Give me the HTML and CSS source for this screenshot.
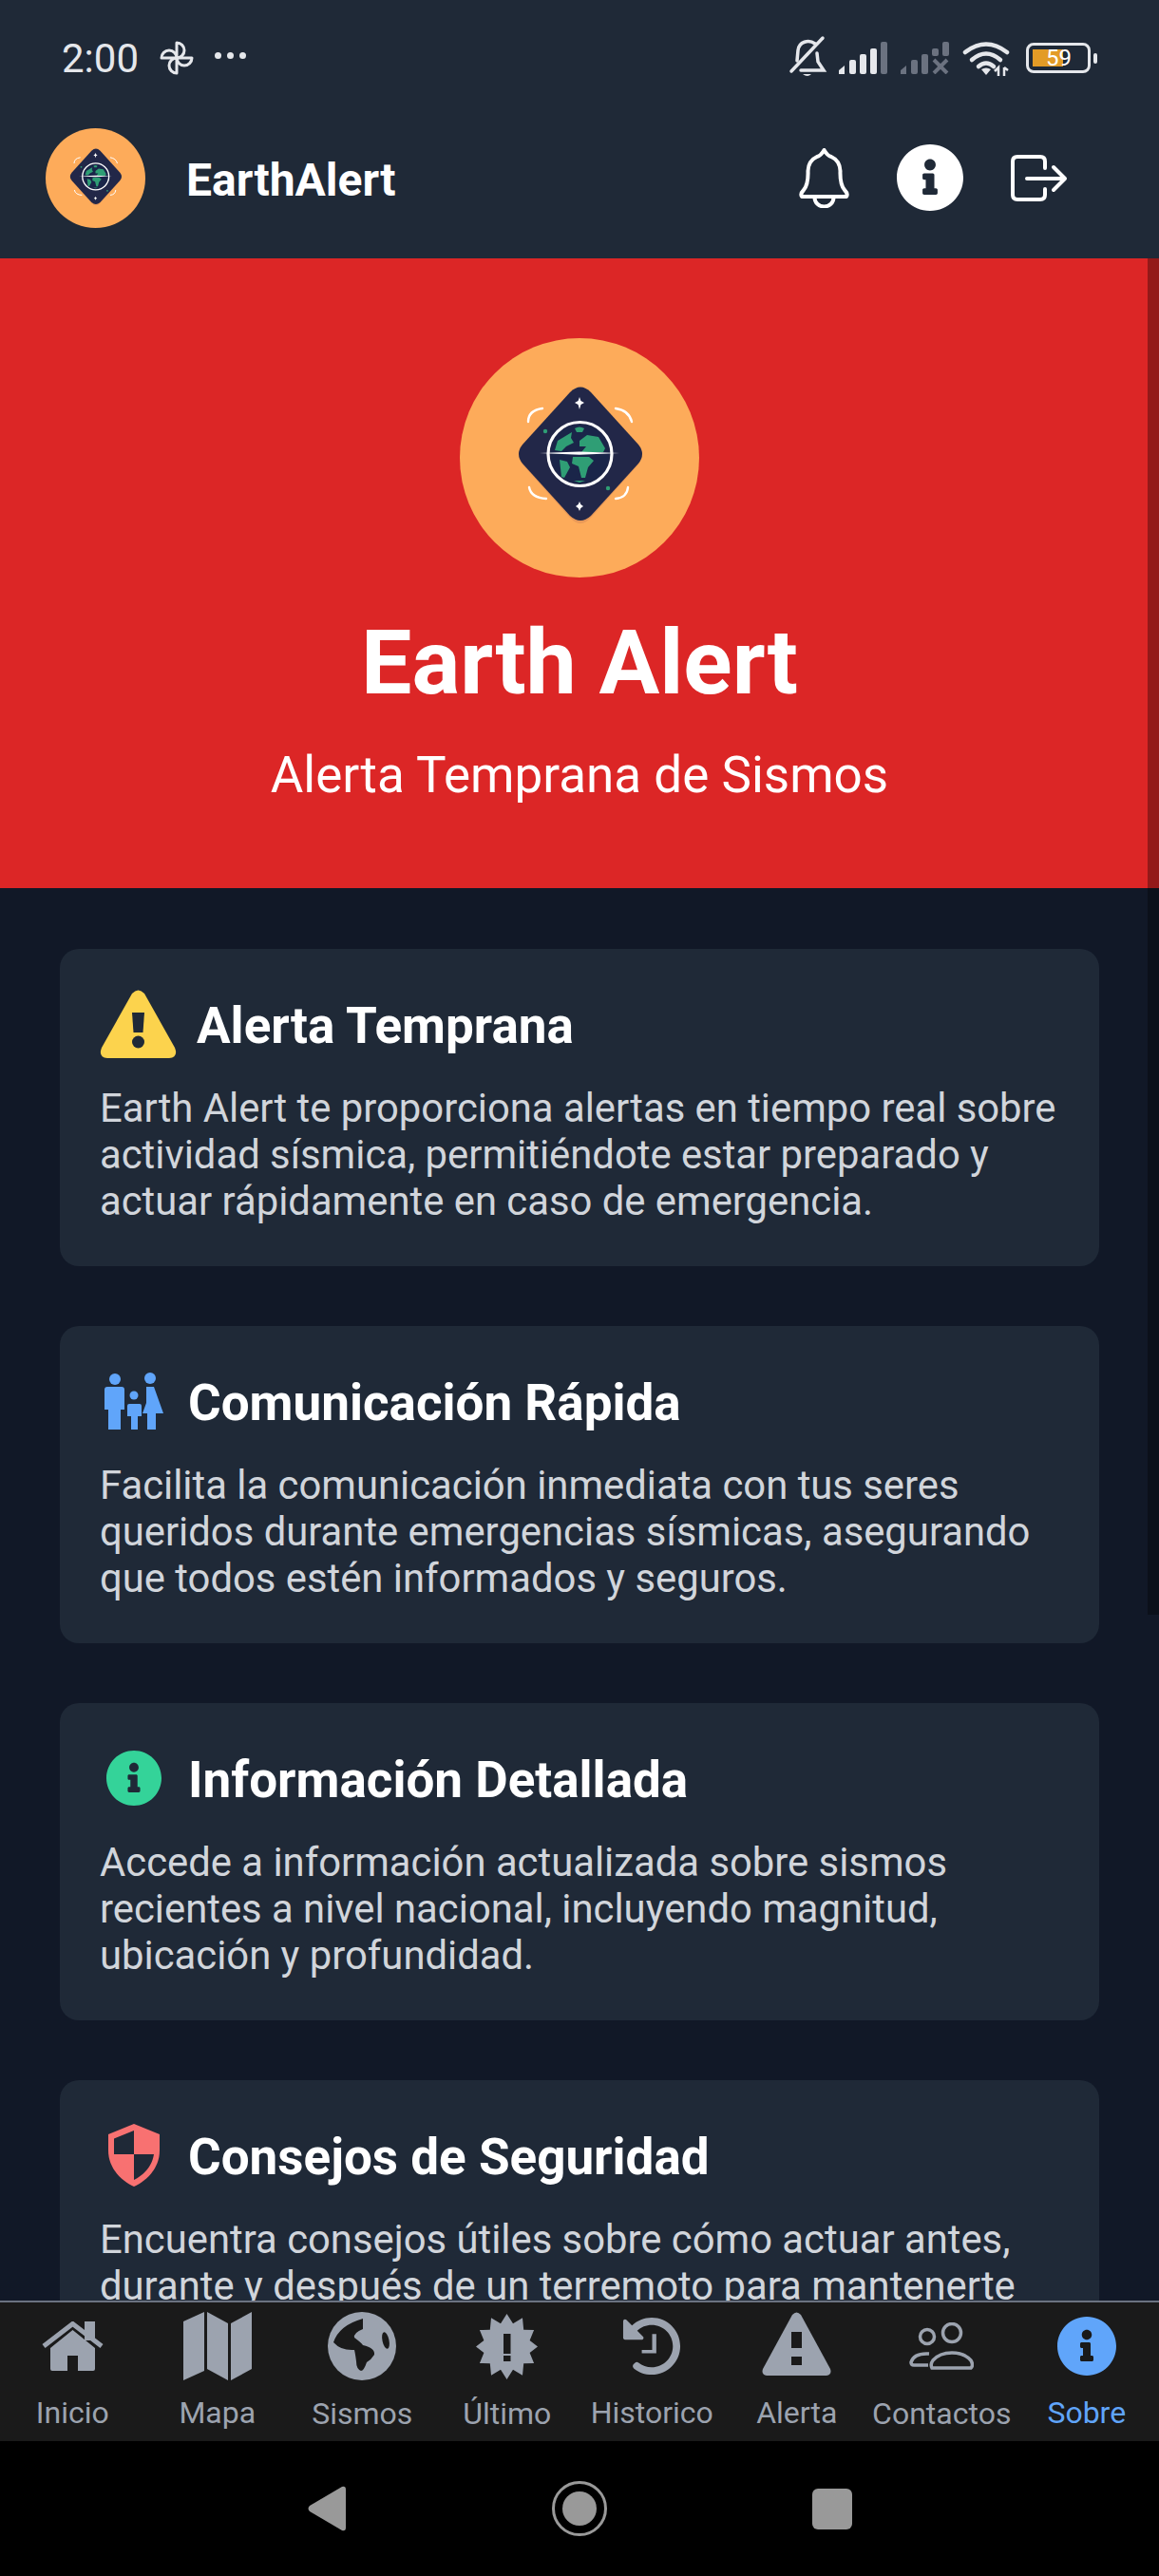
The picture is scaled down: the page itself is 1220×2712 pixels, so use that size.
FILE: index.html
```html
<!DOCTYPE html>
<html lang="es">
<head>
    <meta charset="UTF-8">
    <meta name="viewport" content="width=device-width, initial-scale=1.0">
    <title>Earth Alert</title>
    <link rel="stylesheet" href="styles.css">
</head>
<body>
    <!-- shared icons -->
    <svg class="sprite">
        <symbol id="logo" viewBox="0 0 252 252">
            <circle cx="126" cy="126" r="126" fill="#fdab5a"/>
            <path d="M116 62 Q127 49 138 62 L187 114 Q195 124 187 134 L138 189 Q127 201 116 189 L67 134 Q59 124 67 114Z" fill="#ea9a58"/>
            <path d="M116 57 Q127 46 138 57 L188 112 Q196 122 188 132 L138 187 Q127 197 116 187 L66 132 Q58 122 66 112Z" fill="#222748"/>
            <circle cx="126.5" cy="122" r="31" fill="#1a2549"/>
            <g fill="#2f9e75">
                <path d="M121 95 Q126 92 131 95 L129 99 H123Z"/>
                <path d="M118 99 L103 108 L100 118 L107 119 L112 114 L120 110 L117 105Z"/>
                <path d="M126 108 L134 102 L146 104 L153 116 L151 120 H128 L133 114 L126 114Z"/>
                <path d="M119 125 H136 L141 129 L135 136 L132 147 L128 147 L125 135 L118 132Z"/>
                <path d="M105 128 L113 130 L116 136 L110 147 L107 146Z"/>
                <path d="M120 150 H132 L126 152Z"/>
                <circle cx="90" cy="98" r="2.2"/>
                <circle cx="156" cy="158" r="2.2"/>
            </g>
            <circle cx="126.5" cy="122" r="33.5" fill="none" stroke="#fff" stroke-width="3.2"/>
            <path d="M84 121 L126 119.4 L168 121 L126 122.8Z" fill="#fff"/>
            <path d="M126 62 L127.4 66 L131 68 L127.4 70 L126 75 L124.6 70 L121 68 L124.6 66Z" fill="#fff"/>
            <path d="M126 172 L127.3 175 L130 177 L127.3 179 L126 182 L124.7 179 L122 177 L124.7 175Z" fill="#fff"/>
            <g fill="none" stroke="#fff" stroke-width="2.4" stroke-linecap="round">
                <path d="M72 88 Q72 76 87 74"/>
                <path d="M164 74 Q178 76 181 88"/>
                <path d="M73 157 Q75 168 91 169"/>
                <path d="M164 169 Q176 168 177 157"/>
            </g>
        </symbol>
        <symbol id="info" viewBox="8 8 496 496">
            <path d="M256 8C119.043 8 8 119.083 8 256c0 136.997 111.043 248 248 248s248-111.003 248-248C504 119.083 392.957 8 256 8zm0 110c23.196 0 42 18.804 42 42s-18.804 42-42 42-42-18.804-42-42 18.804-42 42-42zm56 254c0 6.627-5.373 12-12 12h-88c-6.627 0-12-5.373-12-12v-24c0-6.627 5.373-12 12-12h12v-64h-12c-6.627 0-12-5.373-12-12v-24c0-6.627 5.373-12 12-12h64c6.627 0 12 5.373 12 12v100h12c6.627 0 12 5.373 12 12v24z"/>
        </symbol>
    </svg>

    <div class="screen">
        <div class="top">
            <div class="status">
                <span class="time">2:00</span>
                <svg class="fan" viewBox="0 0 36 36" fill="none" stroke="#e5e7eb" stroke-width="3" stroke-linejoin="round">
                    <path d="M18 18 V2 A8 8 0 0 1 18 18Z"/>
                    <path d="M18 18 H34 A8 8 0 0 1 18 18Z"/>
                    <path d="M18 18 V34 A8 8 0 0 1 18 18Z"/>
                    <path d="M18 18 H2 A8 8 0 0 1 18 18Z"/>
                </svg>
                <span class="dots"><i></i><i></i><i></i></span>
                <div class="status-right">
                    <svg class="st-bell" viewBox="0 0 38 40" fill="none" stroke="#e5e7eb" stroke-width="3.500" stroke-linecap="round">
                        <path d="M27 5 C20 0 10 3 9 12 L8 23"/>
                        <path d="M29 15 L30 24 L36 33 H12"/>
                        <path d="M2 34 L35 -1"/>
                        <path d="M14 37 H23 Q19 41 14 37Z" fill="#e5e7eb" stroke="none"/>
                    </svg>
                    <svg class="st-signal" viewBox="0 0 51 34">
                        <path d="M0 34 V30 L6 25 V34Z" fill="#e5e7eb"/>
                        <rect x="11" y="19" width="7" height="15" rx="2" fill="#e5e7eb"/>
                        <rect x="22" y="13" width="7" height="21" rx="2" fill="#e5e7eb"/>
                        <rect x="33" y="7" width="7" height="27" rx="2" fill="#e5e7eb"/>
                        <rect x="44" y="0" width="7" height="34" rx="2" fill="#6b7280"/>
                    </svg>
                    <svg class="st-signal" viewBox="0 0 51 34">
                        <g fill="#6b7280">
                            <path d="M0 34 V30 L6 25 V34Z"/>
                            <rect x="11" y="19" width="7" height="15" rx="2"/>
                            <rect x="22" y="13" width="7" height="21" rx="2"/>
                            <rect x="33" y="7" width="7" height="8" rx="2"/>
                            <rect x="44" y="0" width="7" height="15" rx="2"/>
                        </g>
                        <path d="M35 19 L49 33 M49 19 L35 33" stroke="#6b7280" stroke-width="4"/>
                    </svg>
                    <svg class="st-wifi" viewBox="0 0 50 38" fill="none" stroke="#e5e7eb" stroke-width="4.500" stroke-linecap="round">
                        <path d="M3 13 Q25 -4 47 13"/>
                        <path d="M10 21 Q25 8 40 21"/>
                        <path d="M17 28 Q25 21 33 28"/>
                        <path d="M25 37 L20 31 Q25 28 30 31Z" fill="#e5e7eb" stroke="none"/>
                        <path d="M38 38 V29 L34 33 M44 29 V38 M44 29 L48 32" stroke-width="2.500" stroke-linecap="butt"/>
                    </svg>
                    <div class="battery">
                        <span class="battery-fill"></span>
                        <span class="battery-num">59</span>
                    </div>
                    <span class="battery-nub"></span>
                </div>
            </div>
            <header class="head">
                <svg class="head-logo"><use href="#logo"/></svg>
                <span class="brand">EarthAlert</span>
                <div class="head-actions">
                    <svg class="act-bell" viewBox="0 0 53 63" fill="none" stroke="#fff" stroke-width="4" stroke-linejoin="round">
                        <path d="M26.500 2 Q23 8 19 9 Q10 13 9.500 24 Q10 38 5 44 Q1 48 3 51 H50 Q52 48 48 44 Q43 38 43.500 24 Q43 13 34 9 Q30 8 26.500 2Z"/>
                        <path d="M16.500 52 A10 9.500 0 0 0 36.500 52"/>
                    </svg>
                    <svg class="act-info"><use href="#info"/></svg>
                    <svg class="act-out" viewBox="0 0 60 49" fill="none" stroke="#fff" stroke-width="4" stroke-linecap="round" stroke-linejoin="round">
                        <path d="M36 14 V7 Q36 2 31 2 H7 Q2 2 2 7 V42 Q2 47 7 47 H31 Q36 47 36 42 V36"/>
                        <path d="M17 25 H57 M45 13 L57 25 L45 37"/>
                    </svg>
                </div>
            </header>
        </div>

        <main class="content">
            <section class="hero">
                <svg class="hero-logo"><use href="#logo"/></svg>
                <h1>Earth Alert</h1>
                <p>Alerta Temprana de Sismos</p>
            </section>

            <div class="cards">
                <article class="card">
                    <h2>
                        <span class="card-icon card-icon-wide">
                            <svg width="81" height="72" viewBox="0 0 81 72">
                                <path d="M34 4 Q40.500 -3 47 4 L79 61 Q83 71 73 72 H8 Q-2 71 2 61Z" fill="#fcd34d"/>
                                <path d="M34 24 H47 L45.500 45 H35.500Z" fill="#1f2937"/>
                                <circle cx="40.500" cy="55" r="6.500" fill="#1f2937"/>
                            </svg>
                        </span>
                        Alerta Temprana
                    </h2>
                    <p>Earth Alert te proporciona alertas en tiempo real sobre actividad sísmica, permitiéndote estar preparado y actuar rápidamente en caso de emergencia.</p>
                </article>

                <article class="card">
                    <h2>
                        <span class="card-icon">
                            <svg width="62" height="60" viewBox="0 0 62 60" fill="#60a5fa">
                                <circle cx="11" cy="7" r="6"/>
                                <path d="M3 15 H18 Q21 15 21 18 V39 H17 V60 H4 V39 H0 V18 Q0 15 3 15Z"/>
                                <circle cx="31" cy="24" r="4.500"/>
                                <path d="M26 33 H37 Q39 33 39 35 V46 H35 V60 H28 V46 H24 V35 Q24 33 26 33Z"/>
                                <circle cx="48" cy="6" r="6"/>
                                <path d="M44 15 H52 L62 43 H54 V60 H45 V43 H40 L44 32Z"/>
                            </svg>
                        </span>
                        Comunicación Rápida
                    </h2>
                    <p>Facilita la comunicación inmediata con tus seres queridos durante emergencias sísmicas, asegurando que todos estén informados y seguros.</p>
                </article>

                <article class="card">
                    <h2>
                        <span class="card-icon">
                            <svg class="green-info"><use href="#info"/></svg>
                        </span>
                        Información Detallada
                    </h2>
                    <p>Accede a información actualizada sobre sismos recientes a nivel nacional, incluyendo magnitud, ubicación y profundidad.</p>
                </article>

                <article class="card">
                    <h2>
                        <span class="card-icon">
                            <svg width="54" height="66" viewBox="0 0 54 66">
                                <path d="M27 0 L54 11 V28 C54 47 40 60 27 66 C14 60 0 47 0 28 V11Z" fill="#f87171"/>
                                <path d="M27 7 L6 15.500 V32 H27Z M27 32 H48 C46 45 37 54 27 59Z" fill="#1f2937"/>
                            </svg>
                        </span>
                        Consejos de Seguridad
                    </h2>
                    <p>Encuentra consejos útiles sobre cómo actuar antes, durante y después de un terremoto para mantenerte seguro.</p>
                </article>
            </div>

            <div class="scrollbar"></div>
        </main>

        <nav class="tabs">
            <a class="tab" href="#">
                <span class="tab-icon">
                    <svg width="65" height="52" viewBox="0 0 65 52">
                        <path d="M2 26 L32.500 2.500 L63 26" fill="none" stroke="#9ca3af" stroke-width="5"/>
                        <path d="M45 0 H56 V20 H45Z M32.500 9 L56 28 V50 Q56 52 54 52 H38 V36 H27 V52 H11 Q9 52 9 50 V28Z"/>
                    </svg>
                </span>
                <span class="tab-label">Inicio</span>
            </a>
            <a class="tab" href="#">
                <span class="tab-icon">
                    <svg width="72" height="72" viewBox="0 0 72 72">
                        <path d="M22 0 V62 L0 72 V10Z M25 0 L47 12 V72 L25 60Z M72 0 V60 L50 72 V12Z"/>
                    </svg>
                </span>
                <span class="tab-label">Mapa</span>
            </a>
            <a class="tab tab-low" href="#">
                <span class="tab-icon">
                    <svg width="72" height="72" viewBox="0 0 72 72">
                        <circle cx="36" cy="36" r="36"/>
                        <path d="M6 32 Q12 14 37 7 V18 Q27 22 28 27 Q36 33 37 35 Q50 38 49 45 Q46 50 41 53 Q38 62 35 62 Q30 60 30 52 Q29 44 28 40 Q14 41 6 32Z" fill="#1a1a1a"/>
                        <ellipse cx="61" cy="30" rx="3.500" ry="9" fill="#1a1a1a" transform="rotate(-12 61 30)"/>
                    </svg>
                </span>
                <span class="tab-label">Sismos</span>
            </a>
            <a class="tab tab-low" href="#">
                <span class="tab-icon">
                    <svg width="65" height="69" viewBox="0 0 65 69">
                        <path d="M32.500 0 L39 10.300 L49 4.200 L50.200 16.800 L61.100 17 L56.600 28 L65 34.500 L56.600 41 L61.100 52 L50.200 52.200 L49 64.800 L39 58.700 L32.500 69 L26 58.700 L16 64.800 L14.800 52.200 L3.900 52 L8.400 41 L0 34.500 L8.400 28 L3.900 17 L14.800 16.800 L16 4.200 L26 10.300Z"/>
                        <path d="M29 21 H36.500 V42 H29Z M29 44 H36.500 V50 H29Z" fill="#1a1a1a"/>
                    </svg>
                </span>
                <span class="tab-label">Último</span>
            </a>
            <a class="tab" href="#">
                <span class="tab-icon">
                    <svg width="62" height="62" viewBox="0 0 512 512">
                        <path d="M504 255.531c.253 136.640-111.180 248.372-247.820 248.468-59.015.042-113.223-20.530-155.822-54.911-11.077-8.940-11.905-25.541-1.839-35.607l11.267-11.267c8.609-8.609 22.353-9.551 31.891-1.984C173.062 425.135 212.781 440 256 440c101.705 0 184-82.311 184-184 0-101.705-82.311-184-184-184-48.814 0-93.149 18.969-126.068 49.932l50.754 50.754c10.080 10.080 2.941 27.314-11.313 27.314H24c-8.837 0-16-7.163-16-16V38.627c0-14.254 17.234-21.393 27.314-11.314l49.372 49.372C129.209 34.136 189.552 8 256 8c136.810 0 247.747 110.780 248 247.531z"/>
                        <path d="M296 150 H260 V288 H170 V318 H296Z"/>
                    </svg>
                </span>
                <span class="tab-label">Historico</span>
            </a>
            <a class="tab" href="#">
                <span class="tab-icon tab-icon-up">
                    <svg width="73" height="67" viewBox="0 0 73 67">
                        <path d="M32 3 Q36.500 -2 41 3 L72 60 Q74 66 68 67 H5 Q-1 66 1 60Z"/>
                        <path d="M31 21 H42 V38 H31Z M31 47 H42 V56 H31Z" fill="#1a1a1a"/>
                    </svg>
                </span>
                <span class="tab-label">Alerta</span>
            </a>
            <a class="tab tab-low" href="#">
                <span class="tab-icon">
                    <svg width="68" height="50" viewBox="0 0 68 50">
                        <g fill="none" stroke="#9ca3af" stroke-width="3.500">
                            <circle cx="45" cy="11" r="9.500"/>
                            <circle cx="19" cy="15" r="7.500"/>
                            <path d="M24 48 Q22 44 25 40 Q32 32 45 32 Q58 32 65 40 Q68 45 65 48Z"/>
                            <path d="M21 33 Q5 32 2 42 Q2 45 5 45 H20"/>
                        </g>
                    </svg>
                </span>
                <span class="tab-label">Contactos</span>
            </a>
            <a class="tab tab-active" href="#">
                <span class="tab-icon">
                    <svg width="62" height="62"><use href="#info"/></svg>
                </span>
                <span class="tab-label">Sobre</span>
            </a>
        </nav>

        <div class="sysnav">
            <svg width="40" height="48" viewBox="0 0 40 48"><path d="M36 1 Q40 0 40 4 V44 Q40 48 36 47 L2 27 Q-1 24 2 21Z" fill="#999"/></svg>
            <svg width="58" height="58" viewBox="0 0 58 58"><circle cx="29" cy="29" r="27.500" fill="none" stroke="#999" stroke-width="3"/><circle cx="29" cy="29" r="18" fill="#999"/></svg>
            <span class="sys-square"></span>
        </div>
    </div>
</body>
</html>
```

FILE: styles.css
```css
* {
    box-sizing: border-box;
}

body {
    margin: 0;
    background-color: #111827;
    font-family: Roboto, "Noto Sans", sans-serif;
}

.sprite {
    display: none;
}

.screen {
    width: 1220px;
    height: 2712px;
    display: flex;
    flex-direction: column;
    overflow: hidden;
}

/* status bar + app bar */
.top {
    background-color: #1f2937;
    height: 272px;
    flex: none;
}

.status {
    height: 102px;
    padding: 40px 65px 20px 65px;
    display: flex;
    align-items: center;
    color: #e5e7eb;
}

.time {
    font-size: 42px;
}

.fan {
    width: 36px;
    height: 36px;
    margin-left: 22px;
}

.dots {
    display: flex;
    gap: 6px;
    margin-left: 22px;
    margin-bottom: 6px;
}

.dots i {
    width: 7px;
    height: 7px;
    border-radius: 50%;
    background-color: #e5e7eb;
}

.status-right {
    margin-left: auto;
    display: flex;
    align-items: center;
}

.st-bell {
    width: 38px;
    height: 40px;
    overflow: visible;
}

.st-signal {
    width: 51px;
    height: 34px;
    margin-left: 14px;
}

.st-wifi {
    width: 50px;
    height: 38px;
    margin-left: 14px;
}

.battery {
    position: relative;
    width: 68px;
    height: 32px;
    margin-left: 17px;
    border: 3px solid #e5e7eb;
    border-radius: 8px;
}

.battery-fill {
    position: absolute;
    left: 4px;
    top: 4px;
    width: 32px;
    height: 18px;
    background-color: #e39b26;
}

.battery-num {
    position: absolute;
    left: 18px;
    top: -2px;
    font-size: 24px;
    line-height: 30px;
    color: #fff;
}

.battery-nub {
    width: 4px;
    height: 11px;
    margin-left: 3px;
    background-color: #e5e7eb;
    border-radius: 2px;
}

.head {
    height: 170px;
    padding: 0 96px 0 48px;
    display: flex;
    align-items: center;
}

.head-logo {
    width: 105px;
    height: 105px;
}

.brand {
    margin: 4px 0 0 43px;
    font-size: 48px;
    font-weight: 700;
    color: #fff;
}

.head-actions {
    margin-left: auto;
    display: flex;
    align-items: center;
    gap: 50px;
}

.act-bell {
    width: 53px;
    height: 63px;
}

.act-info {
    width: 70px;
    height: 70px;
    fill: #fff;
}

.act-out {
    width: 60px;
    height: 49px;
}

/* scrolling part */
.content {
    position: relative;
    flex: 1;
    min-height: 0;
    overflow: hidden;
}

.scrollbar {
    position: absolute;
    top: 0;
    right: 0;
    width: 12px;
    height: 1428px;
    background-color: rgba(0, 0, 0, 0.33);
}

.hero {
    height: 663px;
    padding-top: 84px;
    background-color: #dc2626;
    color: #fff;
    text-align: center;
}

.hero-logo {
    display: block;
    width: 252px;
    height: 252px;
    margin: 0 auto;
}

.hero h1 {
    margin: 37px 0 0;
    font-size: 95px;
    line-height: 106px;
    font-weight: 700;
}

.hero p {
    margin: 35px 0 0;
    font-size: 53px;
    line-height: 60px;
}

.cards {
    padding: 64px 63px;
    display: flex;
    flex-direction: column;
    gap: 63px;
}

.card {
    padding: 42px 40px 44px 42px;
    background-color: #1f2937;
    border-radius: 20px;
}

.card h2 {
    margin: 0;
    display: flex;
    align-items: center;
    gap: 21px;
    font-size: 53px;
    line-height: 78px;
    font-weight: 700;
    color: #fff;
}

.card-icon {
    width: 72px;
    flex: none;
    display: flex;
    justify-content: center;
    margin-top: -4px;
}

.card-icon-wide {
    width: 81px;
}

.green-info {
    width: 58px;
    height: 58px;
    fill: #34d399;
}

.card p {
    margin: 23px 0 0;
    font-size: 41.800px;
    line-height: 49px;
    color: #d1d5db;
}

/* bottom tabs */
.tabs {
    flex: none;
    height: 148px;
    display: grid;
    grid-template-columns: repeat(8, 1fr);
    background-color: #1a1a1a;
    border-top: 2px solid #6b7280;
}

.tab {
    display: flex;
    flex-direction: column;
    text-decoration: none;
    color: #9ca3af;
    text-align: center;
}

.tab-icon {
    height: 92px;
    display: flex;
    align-items: center;
    justify-content: center;
    fill: #9ca3af;
}

.tab-icon-up {
    padding-bottom: 5px;
}

.tab-label {
    margin-top: 4px;
    font-size: 32px;
    line-height: 40px;
}

.tab-low .tab-label {
    margin-top: 5px;
}

.tab-active {
    color: #60a5fa;
}

.tab-active .tab-icon {
    fill: #60a5fa;
}

.sysnav {
    flex: none;
    height: 142px;
    background-color: #000;
    display: flex;
    align-items: center;
    justify-content: space-between;
    padding: 0 323px 0 324px;
}

.sys-square {
    width: 42px;
    height: 43px;
    border-radius: 6px;
    background-color: #999;
}
```
